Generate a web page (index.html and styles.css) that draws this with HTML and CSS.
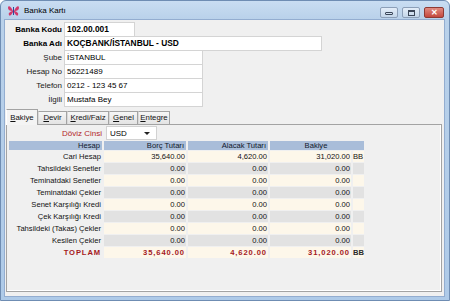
FILE: index.html
```html
<!DOCTYPE html>
<html lang="tr">
<head>
    <meta charset="UTF-8">
    <title>Banka Kartı</title>
    <link rel="stylesheet" href="styles.css">
</head>
<body>
    <div class="window">
        <div class="titlebar">
            <svg class="app-icon" width="13" height="12" viewBox="0 0 13 12">
                <path d="M6 6 C4 1, 1 0, 1 3 C1 5, 3 6, 5 6 C3 7, 1 8, 2 10 C3 12, 5 9, 6 7Z" fill="#d2386a"/>
                <path d="M7 6 C9 1, 12 0, 12 3 C12 5, 10 6, 8 6 C10 7, 12 8, 11 10 C10 12, 8 9, 7 7Z" fill="#d2386a"/>
                <rect x="6" y="2" width="1" height="8" fill="#2b4b9e"/>
            </svg>
            <span class="title">Banka Kartı</span>
            <div class="caption-buttons">
                <span class="cap-btn"><i class="glyph-min"></i></span>
                <span class="cap-btn"><i class="glyph-max"></i></span>
                <span class="cap-btn close">✕</span>
            </div>
        </div>

        <div class="client">
            <div class="form">
                <span class="lbl strong">Banka Kodu</span>
                <div class="field strong w-code">102.00.001</div>
                <span class="lbl strong">Banka Adı</span>
                <div class="field strong w-name">KOÇBANK/İSTANBUL - USD</div>
                <span class="lbl">Şube</span>
                <div class="field w-std">İSTANBUL</div>
                <span class="lbl">Hesap No</span>
                <div class="field w-std">56221489</div>
                <span class="lbl">Telefon</span>
                <div class="field w-std">0212 - 123 45 67</div>
                <span class="lbl">İlgili</span>
                <div class="field w-std">Mustafa Bey</div>
            </div>

            <div class="tabs">
                <span class="tab active"><u>B</u>akiye</span>
                <span class="tab"><u>D</u>evir</span>
                <span class="tab"><u>K</u>redi/Faiz</span>
                <span class="tab"><u>G</u>enel</span>
                <span class="tab"><u>E</u>ntegre</span>
            </div>

            <div class="panel">
                <div class="currency-row">
                    <span class="lbl red">Döviz Cinsi</span>
                    <div class="combo"><span>USD</span><span class="arrow"></span></div>
                </div>

                <div class="grid">
                    <div class="hd right">Hesap</div>
                    <div class="hd right">Borç Tutarı</div>
                    <div class="hd right">Alacak Tutarı</div>
                    <div class="hd center span2">Bakiye</div>

                    <div class="name">Cari Hesap</div>
                    <div class="cell cream">35,640.00</div>
                    <div class="cell cream">4,620.00</div>
                    <div class="cell cream">31,020.00</div>
                    <div class="cell cream unit">BB</div>

                    <div class="name">Tahsildeki Senetler</div>
                    <div class="cell gray">0.00</div>
                    <div class="cell gray">0.00</div>
                    <div class="cell gray">0.00</div>
                    <div class="cell gray unit"></div>

                    <div class="name">Teminatdaki Senetler</div>
                    <div class="cell cream">0.00</div>
                    <div class="cell cream">0.00</div>
                    <div class="cell cream">0.00</div>
                    <div class="cell cream unit"></div>

                    <div class="name">Teminatdaki Çekler</div>
                    <div class="cell gray">0.00</div>
                    <div class="cell gray">0.00</div>
                    <div class="cell gray">0.00</div>
                    <div class="cell gray unit"></div>

                    <div class="name">Senet Karşılığı Kredi</div>
                    <div class="cell cream">0.00</div>
                    <div class="cell cream">0.00</div>
                    <div class="cell cream">0.00</div>
                    <div class="cell cream unit"></div>

                    <div class="name">Çek Karşılığı Kredi</div>
                    <div class="cell gray">0.00</div>
                    <div class="cell gray">0.00</div>
                    <div class="cell gray">0.00</div>
                    <div class="cell gray unit"></div>

                    <div class="name">Tahsildeki (Takas) Çekler</div>
                    <div class="cell cream">0.00</div>
                    <div class="cell cream">0.00</div>
                    <div class="cell cream">0.00</div>
                    <div class="cell cream unit"></div>

                    <div class="name">Kesilen Çekler</div>
                    <div class="cell gray">0.00</div>
                    <div class="cell gray">0.00</div>
                    <div class="cell gray">0.00</div>
                    <div class="cell gray unit"></div>

                    <div class="name total">TOPLAM</div>
                    <div class="cell cream total">35,640.00</div>
                    <div class="cell cream total">4,620.00</div>
                    <div class="cell cream total">31,020.00</div>
                    <div class="cell cream unit total-unit">BB</div>
                </div>
            </div>
        </div>
    </div>
</body>
</html>
```

FILE: styles.css
```css
* {
    box-sizing: border-box;
}
body {
    margin: 0;
    font-family: "Liberation Sans", Arial, sans-serif;
    font-size: 8px;
    color: #111;
    background: #ffffff;
}
.window {
    width: 450px;
    height: 301px;
    display: flex;
    flex-direction: column;
    padding: 0 5px 4px 4px;
    border: 1px solid #6f8db3;
    border-radius: 6px 6px 0 0;
    background: linear-gradient(#c9ddf2, #b9d1ea 18px, #aecae8);
}
.titlebar {
    height: 19px;
    display: flex;
    align-items: center;
}
.app-icon {
    margin-left: 2px;
    margin-right: 4px;
}
.title {
    font-size: 8px;
    color: #000;
}
.caption-buttons {
    margin-left: auto;
    display: flex;
    gap: 4px;
    margin-top: 4px;
}
.cap-btn {
    width: 18px;
    height: 11px;
    border: 1px solid #8c9fb8;
    border-radius: 2px;
    background: linear-gradient(#e3edf8, #c4d6ea);
    display: flex;
    align-items: center;
    justify-content: center;
}
.cap-btn.close {
    width: 20px;
    background: linear-gradient(#e08a80, #c4483e);
    border-color: #8e3a34;
    color: #fff;
    font-size: 8px;
    font-weight: bold;
    line-height: 9px;
}
.glyph-min {
    width: 8px;
    height: 3px;
    border: 1px solid #3b4658;
    border-radius: 1px;
    margin-top: 2px;
}
.glyph-max {
    width: 7px;
    height: 6px;
    border: 1px solid #3b4658;
    border-top-width: 2px;
}

.client {
    flex: 1;
    background: #f0f0f0;
    box-shadow: 0 0 0 1px #93add0;
    padding-top: 2px;
}

.form {
    display: grid;
    grid-template-columns: 57px auto;
    grid-auto-rows: 14px;
    column-gap: 2px;
    align-items: center;
}
.lbl {
    text-align: right;
    color: #1a1a1a;
    white-space: nowrap;
}
.lbl.strong {
    font-weight: bold;
    font-size: 8px;
    color: #000;
}
.lbl.red {
    color: #b3262a;
}
.field {
    height: 15px;
    align-self: start;
    background: #fff;
    border: 1px solid #d4d4d4;
    padding-left: 2px;
    line-height: 13px;
    white-space: nowrap;
    overflow: hidden;
    color: #000;
}
.field.strong {
    font-weight: bold;
    font-size: 8.4px;
}
.w-code { width: 71px; }
.w-name { width: 258px; }
.w-std { width: 139px; }

.tabs {
    display: flex;
    align-items: flex-end;
    height: 15px;
    margin-top: 3px;
    margin-left: 1px;
    position: relative;
    z-index: 1;
}
.tab {
    height: 13px;
    padding: 0;
    text-align: center;
    line-height: 12px;
    font-size: 7.8px;
    border: 1px solid #a3a3a3;
    border-bottom: none;
    border-left-color: #d9d9d9;
    background: linear-gradient(#f6f6f6, #e3e3e3);
    color: #111;
    white-space: nowrap;
}
.tab:nth-child(2) { width: 29px; }
.tab:nth-child(3) { width: 42px; }
.tab:nth-child(4) { width: 29px; }
.tab:nth-child(5) { width: 32px; }
.tab.active {
    width: 32px;
    height: 16px;
    margin-bottom: -1px;
    padding-top: 2px;
    background: #f4f4f4;
    border-color: #a3a3a3;
    border-left-color: #ffffff;
}

.panel {
    width: 436px;
    height: 168px;
    margin-left: 1px;
    border: 1px solid #a3a3a3;
    box-shadow: inset -1px -1px 0 #ffffff;
    background: #f0f0f0;
    padding-left: 2px;
}
.currency-row {
    display: grid;
    grid-template-columns: 93px auto;
    column-gap: 4px;
    height: 16px;
    align-items: center;
}
.combo {
    width: 51px;
    height: 14px;
    background: #fff;
    border: 1px solid #d2d2d2;
    display: flex;
    align-items: center;
    padding-left: 3px;
    color: #000;
}
.arrow {
    margin-left: auto;
    margin-right: 6px;
    border-left: 3px solid transparent;
    border-right: 3px solid transparent;
    border-top: 3px solid #222;
}

.grid {
    display: grid;
    grid-template-columns: 93px 82px 80px 81px 11px;
    grid-template-rows: 9px;
    grid-auto-rows: 11px;
    column-gap: 2px;
    row-gap: 1px;
    font-size: 7.6px;
    line-height: 11px;
    white-space: nowrap;
}
.hd {
    background: #a9bdd9;
    color: #10182a;
    line-height: 9px;
    padding-right: 2px;
}
.right { text-align: right; }
.center { text-align: center; }
.span2 { grid-column: span 2; }
.name {
    text-align: right;
    padding-right: 1px;
    color: #111;
}
.cell {
    text-align: right;
    padding-right: 1px;
    color: #111;
}
.cream { background: #fdf7ea; }
.gray { background: #e2e2e2; }
.unit {
    text-align: left;
    padding: 0;
}
.total {
    font-weight: bold;
    color: #a4191c;
    letter-spacing: 0.9px;
}
.total-unit {
    font-weight: bold;
    color: #2a2a2a;
}
```
